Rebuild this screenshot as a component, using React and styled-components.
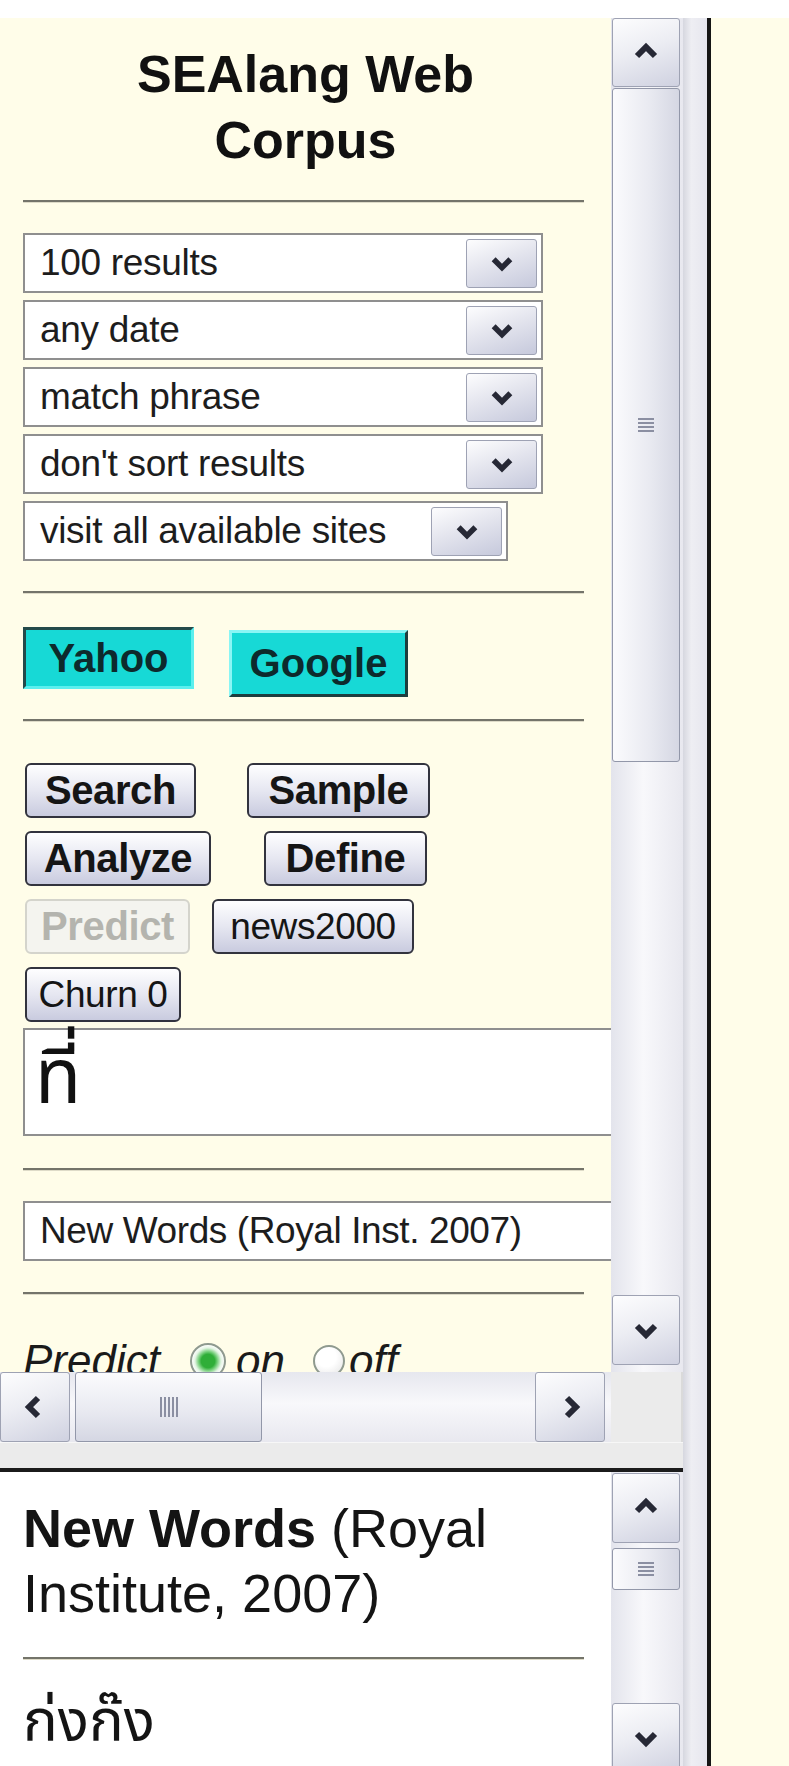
import styled, { createGlobalStyle } from "styled-components";

const GlobalStyle = createGlobalStyle`
  html, body {
    margin: 0;
    padding: 0;
    background: #fff;
  }
  body {
    font-family: "Liberation Sans", Arial, sans-serif;
    color: #111;
  }
`;

const CREAM = "#fffde9";
const THAI = `"Noto Sans Thai", "Noto Sans Thai UI", Loma, Garuda, Tahoma, "DejaVu Sans", sans-serif`;

const Page = styled.div`
  width: 789px;
  height: 1766px;
  padding-top: 18px;
  box-sizing: border-box;
  background: #fff;
  display: flex;
  overflow: hidden;
`;

const Frames = styled.div`
  width: 683px;
  flex-shrink: 0;
  display: flex;
  flex-direction: column;
`;

const Strip = styled.div`
  width: 24px;
  flex-shrink: 0;
  background: linear-gradient(to right, #d6d7df, #eeeef3 35%, #e6e6ee);
`;

const Edge = styled.div`
  width: 4px;
  flex-shrink: 0;
  background: #151515;
`;

const Outside = styled.div`
  flex: 1;
  background: ${CREAM};
`;

const Frame = styled.div`
  height: ${(p) => p.$h}px;
  flex-shrink: 0;
  display: flex;
  flex-direction: column;
  overflow: hidden;
`;

const Viewport = styled.div`
  height: ${(p) => p.$h}px;
  flex-shrink: 0;
  display: flex;
`;

const Pane = styled.div`
  width: 611px;
  flex-shrink: 0;
  overflow: hidden;
  background: ${(p) => p.$bg};
  padding: ${(p) => p.$pt}px 0 0 23px;
  box-sizing: border-box;
`;

/* scrollbars */
const VScroll = styled.div`
  width: 72px;
  flex-shrink: 0;
  display: flex;
  flex-direction: column;
  padding: 0 3px 0 1px;
  box-sizing: border-box;
  background: linear-gradient(to right, #e3e4ec, #f8f8fb 45%, #e8e8ef);
`;

const HScroll = styled.div`
  width: 611px;
  height: 70px;
  flex-shrink: 0;
  display: flex;
  padding-right: 6px;
  box-sizing: border-box;
  background: linear-gradient(to bottom, #e6e7ee, #f8f8fb 45%, #e8e8ef);
`;

const Corner = styled.div`
  flex: 1;
  background: #ebebeb;
  border-right: 2px solid #dadada;
`;

const ScrollBtn = styled.div`
  width: ${(p) => p.$w || 68}px;
  height: ${(p) => p.$h || 70}px;
  flex-shrink: 0;
  margin-top: ${(p) => (p.$auto ? "auto" : `${p.$mt || 0}px`)};
  margin-bottom: ${(p) => p.$mb || 0}px;
  margin-left: ${(p) => (p.$pushRight ? "auto" : "0")};
  box-sizing: border-box;
  border: 1px solid #9ea2b3;
  border-radius: 3px;
  background: linear-gradient(160deg, #fdfdfe 0%, #ecedf3 45%, #cfd1e0 100%);
  display: flex;
  align-items: center;
  justify-content: center;
`;

const Thumb = styled.div`
  width: ${(p) => p.$w}px;
  height: ${(p) => p.$h}px;
  flex-shrink: 0;
  margin: ${(p) => p.$m};
  box-sizing: border-box;
  border: 1px solid #9297a9;
  border-radius: 3px;
  background: ${(p) =>
    p.$horiz
      ? "linear-gradient(to bottom, #fbfbfd, #e9eaf1 55%, #d5d7e3)"
      : "linear-gradient(to right, #fbfbfd, #e9eaf1 55%, #d5d7e3)"};
  display: flex;
  align-items: center;
  justify-content: center;
`;

const Grip = styled.div`
  width: ${(p) => (p.$horiz ? 18 : 16)}px;
  height: ${(p) => (p.$horiz ? 20 : 15)}px;
  background: repeating-linear-gradient(
    ${(p) => (p.$horiz ? "to right" : "to bottom")},
    #8b8fa2 0 2px,
    transparent 2px 4px
  );
`;

const FrameBand = styled.div`
  height: 26px;
  flex-shrink: 0;
  background: #ebebeb;
  border-top: 1px solid #f7f7f7;
  box-sizing: border-box;
`;

const Divider = styled.div`
  height: 4px;
  flex-shrink: 0;
  background: #1b1b1b;
`;

const CHEVRONS = {
  up: "5,17 14,8 23,17",
  down: "5,10 14,19 23,10",
  left: "17,5 8,14 17,23",
  right: "11,5 20,14 11,23",
};

const Chevron = ({ dir, size = 28 }) => (
  <svg width={size} height={size} viewBox="0 0 28 28">
    <polyline
      points={CHEVRONS[dir]}
      fill="none"
      stroke="#262835"
      strokeWidth="6"
    />
  </svg>
);

/* form content */
const Title = styled.div`
  width: 565px;
  text-align: center;
  font-size: 52px;
  line-height: 66px;
  font-weight: bold;
  color: #111;
`;

const Rule = styled.hr`
  width: 561px;
  height: 0;
  margin: ${(p) => p.$mt}px 0 0 0;
  border: 0;
  border-top: 2px solid #74746a;
  border-bottom: 1px solid #dedbc8;
`;

const SelectList = styled.div`
  margin-top: ${(p) => p.$mt}px;
  display: flex;
  flex-direction: column;
  gap: 7px;
`;

const SelectBox = styled.div`
  width: ${(p) => p.$w}px;
  height: 60px;
  box-sizing: border-box;
  border: 2px solid #8f8f8f;
  background: #fff;
  display: flex;
  align-items: center;
  justify-content: space-between;
  padding: 0 4px 0 15px;
  font-size: 37px;
  letter-spacing: -0.3px;
  color: #1d1d1d;
`;

const DropButton = styled.div`
  width: 71px;
  height: 49px;
  box-sizing: border-box;
  border: 1px solid #9ea2b4;
  border-radius: 3px;
  background: linear-gradient(160deg, #fdfdfe 0%, #e4e5ee 45%, #c6c9dc 100%);
  display: flex;
  align-items: center;
  justify-content: center;
`;

const EngineRow = styled.div`
  margin-top: ${(p) => p.$mt}px;
  display: flex;
  align-items: flex-start;
  gap: 35px;
`;

const EngineButton = styled.button`
  width: ${(p) => p.$w}px;
  height: ${(p) => p.$h}px;
  margin-top: ${(p) => p.$mt || 0}px;
  padding: 0;
  box-sizing: border-box;
  background: #17d9d6;
  border: 3px solid;
  border-color: ${(p) =>
    p.$pressed
      ? "#234a4a #5cefee #5cefee #234a4a"
      : "#8af6f5 #1d3e3e #1d3e3e #8af6f5"};
  font-family: "Liberation Sans", Arial, sans-serif;
  font-size: 40px;
  font-weight: bold;
  color: #0d2a2c;
`;

const ButtonGrid = styled.div`
  margin-top: ${(p) => p.$mt}px;
  display: flex;
  flex-direction: column;
  gap: 13px;
  padding-left: 2px;
`;

const ButtonRow = styled.div`
  display: flex;
  gap: ${(p) => p.$gap || 0}px;
`;

const FormButton = styled.button`
  width: ${(p) => p.$w}px;
  height: 55px;
  padding: 0;
  box-sizing: border-box;
  border: 2px solid ${(p) => (p.disabled ? "#d4d4cc" : "#32333e")};
  border-radius: 6px;
  background: ${(p) =>
    p.disabled ? "#f4f4ef" : "linear-gradient(#fefeff, #e6e7f1 50%, #c9cbdf)"};
  font-family: "Liberation Sans", Arial, sans-serif;
  font-size: ${(p) => (p.$bold ? 40 : 37)}px;
  font-weight: ${(p) => (p.$bold ? "bold" : "normal")};
  letter-spacing: -0.4px;
  color: ${(p) => (p.disabled ? "#b4b4ae" : "#151515")};
`;

const ThaiBox = styled.div`
  width: 640px;
  height: 108px;
  margin-top: ${(p) => p.$mt}px;
  box-sizing: border-box;
  border: 2px solid #8f8f8f;
  border-right: 0;
  background: #fff;
  padding: 0 0 0 10px;
  font-family: ${THAI};
  font-size: 76px;
  line-height: 100px;
  color: #111;
`;

const TextInput = styled.div`
  width: 640px;
  height: 60px;
  margin-top: ${(p) => p.$mt}px;
  box-sizing: border-box;
  border: 2px solid #8f8f8f;
  border-right: 0;
  background: #fff;
  padding-left: 15px;
  display: flex;
  align-items: center;
  font-size: 37px;
  letter-spacing: -0.4px;
  color: #1d1d1d;
`;

const PredictRow = styled.div`
  margin-top: ${(p) => p.$mt}px;
  display: flex;
  align-items: center;
  height: 52px;
  font-size: 44px;
  font-style: italic;
  color: #1a1a1a;
  white-space: nowrap;
`;

const Radio = styled.span`
  width: ${(p) => p.$size}px;
  height: ${(p) => p.$size}px;
  margin: 0 ${(p) => p.$mr}px 0 ${(p) => p.$ml}px;
  flex-shrink: 0;
  box-sizing: border-box;
  border-radius: 50%;
  border: 2px solid #8f9a8f;
  background: ${(p) =>
    p.$on
      ? "radial-gradient(circle, #2fae38 0 30%, #79d07e 42%, #e3f4e3 58%, #fff 72%)"
      : "radial-gradient(circle at 40% 35%, #fff 40%, #e2e2e2)"};
`;

/* bottom frame */
const EntryTitle = styled.div`
  font-size: 54px;
  line-height: 65px;
  color: #141414;
  white-space: nowrap;
`;

const ThaiWord = styled.div`
  margin-top: ${(p) => p.$mt}px;
  font-family: ${THAI};
  font-size: 58px;
  line-height: 80px;
  color: #141414;
`;

const selects = [
  { label: "100 results", w: 520 },
  { label: "any date", w: 520 },
  { label: "match phrase", w: 520 },
  { label: "don't sort results", w: 520 },
  { label: "visit all available sites", w: 485 },
];

export default function App() {
  return (
    <>
      <GlobalStyle />
      <Page>
        <Frames>
          <Frame $h={1450}>
            <Viewport $h={1354}>
              <Pane $bg={CREAM} $pt={23}>
                <Title>
                  SEAlang Web
                  <br />
                  Corpus
                </Title>
                <Rule $mt={27} />
                <SelectList $mt={30}>
                  {selects.map((s) => (
                    <SelectBox key={s.label} $w={s.w}>
                      <span>{s.label}</span>
                      <DropButton>
                        <Chevron dir="down" size={26} />
                      </DropButton>
                    </SelectBox>
                  ))}
                </SelectList>
                <Rule $mt={30} />
                <EngineRow $mt={33}>
                  <EngineButton $w={171} $h={62} $pressed>
                    Yahoo
                  </EngineButton>
                  <EngineButton $w={179} $h={67} $mt={3}>
                    Google
                  </EngineButton>
                </EngineRow>
                <Rule $mt={22} />
                <ButtonGrid $mt={41}>
                  <ButtonRow $gap={51}>
                    <FormButton $bold $w={171}>Search</FormButton>
                    <FormButton $bold $w={183}>Sample</FormButton>
                  </ButtonRow>
                  <ButtonRow $gap={53}>
                    <FormButton $bold $w={186}>Analyze</FormButton>
                    <FormButton $bold $w={163}>Define</FormButton>
                  </ButtonRow>
                  <ButtonRow $gap={22}>
                    <FormButton $bold $w={165} disabled>
                      Predict
                    </FormButton>
                    <FormButton $w={202}>news2000</FormButton>
                  </ButtonRow>
                  <ButtonRow>
                    <FormButton $w={156}>Churn 0</FormButton>
                  </ButtonRow>
                </ButtonGrid>
                <ThaiBox $mt={6}>ที่</ThaiBox>
                <Rule $mt={32} />
                <TextInput $mt={30}>New Words (Royal Inst. 2007)</TextInput>
                <Rule $mt={31} />
                <PredictRow $mt={40}>
                  Predict
                  <Radio $on $size={36} $ml={30} $mr={10} />
                  on
                  <Radio $size={32} $ml={28} $mr={4} />
                  off
                </PredictRow>
              </Pane>
              <VScroll>
                <ScrollBtn $h={69}>
                  <Chevron dir="up" />
                </ScrollBtn>
                <Thumb $w={68} $h={674} $m="1px 0 0 0">
                  <Grip />
                </Thumb>
                <ScrollBtn $h={70} $auto $mb={7}>
                  <Chevron dir="down" />
                </ScrollBtn>
              </VScroll>
            </Viewport>
            <Viewport $h={70}>
              <HScroll>
                <ScrollBtn $w={70} $h={70}>
                  <Chevron dir="left" />
                </ScrollBtn>
                <Thumb $horiz $w={187} $h={70} $m="0 0 0 5px">
                  <Grip $horiz />
                </Thumb>
                <ScrollBtn $w={70} $h={70} $pushRight>
                  <Chevron dir="right" />
                </ScrollBtn>
              </HScroll>
              <Corner />
            </Viewport>
            <FrameBand />
          </Frame>
          <Divider />
          <Frame $h={294}>
            <Viewport $h={294}>
              <Pane $bg="#fff" $pt={24}>
                <EntryTitle>
                  <b>New Words</b> (Royal
                  <br />
                  Institute, 2007)
                </EntryTitle>
                <Rule $mt={31} />
                <ThaiWord $mt={22}>ก่งก๊ง</ThaiWord>
              </Pane>
              <VScroll>
                <ScrollBtn $h={70} $mt={1}>
                  <Chevron dir="up" />
                </ScrollBtn>
                <Thumb $w={68} $h={42} $m="5px 0 0 0">
                  <Grip />
                </Thumb>
                <ScrollBtn $h={70} $mt={113}>
                  <Chevron dir="down" />
                </ScrollBtn>
              </VScroll>
            </Viewport>
          </Frame>
        </Frames>
        <Strip />
        <Edge />
        <Outside />
      </Page>
    </>
  );
}
